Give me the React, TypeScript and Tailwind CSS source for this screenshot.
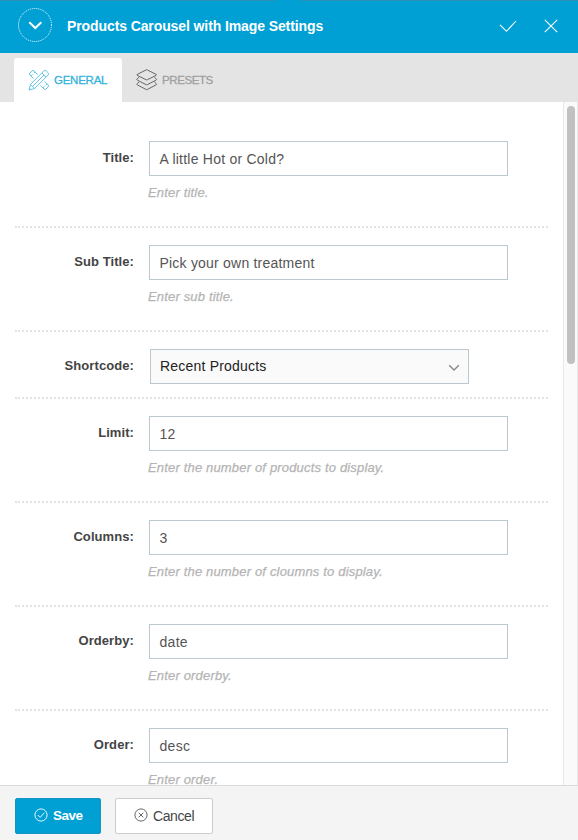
import React from "react";

type Field = {
  label: string;
  value: string;
  help?: string;
  select?: boolean;
  valueTrack: string;
};

const fields: Field[] = [
  { label: "Title:", value: "A little Hot or Cold?", help: "Enter title.", valueTrack: "tracking-[0.23px]" },
  { label: "Sub Title:", value: "Pick your own treatment", help: "Enter sub title.", valueTrack: "tracking-[0.21px]" },
  { label: "Shortcode:", value: "Recent Products", select: true, valueTrack: "tracking-[0.2px]" },
  { label: "Limit:", value: "12", help: "Enter the number of products to display.", valueTrack: "tracking-[0.2px]" },
  { label: "Columns:", value: "3", help: "Enter the number of cloumns to display.", valueTrack: "tracking-[0.2px]" },
  { label: "Orderby:", value: "date", help: "Enter orderby.", valueTrack: "tracking-[0.3px]" },
  { label: "Order:", value: "desc", help: "Enter order.", valueTrack: "tracking-[0.3px]" },
];

function ToolsIcon() {
  return (
    <svg width="22" height="22" viewBox="0 0 22 22" fill="none" stroke="#57bde1" strokeWidth="0.9" strokeLinejoin="round">
      <path d="M9.6 5.6 6 1.9Q5 .9 4 1.9L1.9 4Q.9 5 1.9 6L5.6 9.6M3 7.1l1.7-1.7M7.1 3 5.9 4.2M12.4 16.4 16 20q1 1 2 0l2.1-2.1q1-1 0-2L16.4 12.4M14.9 19l1.7-1.7M19 14.9l-1.2 1.2" />
      <path d="M1 21l1.5-5.6L15.8 2q1.3-1.3 2.6 0L20 3.6q1.3 1.3 0 2.6L6.6 19.5 1 21ZM2.5 15.4 6.6 19.5M13.9 3.9 18.1 8.1M4.6 17.4 16 6M1.5 19.2l1.3 1.3" />
    </svg>
  );
}

function LayersIcon() {
  return (
    <svg width="22" height="22" viewBox="0 0 22 22" fill="none" stroke="#666" strokeWidth="1" strokeLinejoin="round">
      <path d="M10.2.9q.5-.3 1 0l9 4.5q.8.4 0 .9l-9 4.5q-.5.3-1 0l-9-4.5q-.8-.5 0-.9Z" />
      <path d="M3 8.2 1.2 9.8q-.8.8.1 1.3l8.9 4.6q.5.3 1 0l8.9-4.6q.9-.5.1-1.3L18.4 8.2" />
      <path d="M3 13 1.2 14.6q-.8.8.1 1.3l8.9 4.6q.5.3 1 0l8.9-4.6q.9-.5.1-1.3L18.4 13" />
    </svg>
  );
}

function Row({ field }: { field: Field }) {
  return (
    <div className={`flex shrink-0 items-start pt-[17px] ${field.select ? "h-[67px]" : "h-[104px]"} border-b-2 border-dotted border-[#e3e3e3]`}>
      <label className="w-[119px] shrink-0 pt-2 text-right text-[13px] leading-[18px] font-bold tracking-[0.08px] text-[#444]">
        {field.label}
      </label>
      {field.select ? (
        <div className="ml-4 flex h-[35px] w-[319px] items-center justify-between border border-[#bcc8d0] bg-[#fafafa] pr-2 pl-[9px]">
          <span className={`-mt-0.5 text-[14px] leading-[18px] text-[#222] ${field.valueTrack}`}>{field.value}</span>
          <svg width="12" height="8" viewBox="0 0 12 8" fill="none" stroke="#888" strokeWidth="1.4" className="mt-[3px]">
            <path d="M1.2 1.3 6 6l4.8-4.7" />
          </svg>
        </div>
      ) : (
        <div className="ml-[15px] w-[359px]">
          <div className="flex h-[35px] items-center border border-[#bcc8d0] bg-white pt-px pl-[9.5px]">
            <span className={`text-[14px] leading-[18px] text-[#555] ${field.valueTrack}`}>{field.value}</span>
          </div>
          <p className="-ml-px pt-2 text-[13px] leading-[18px] tracking-[0.17px] text-[#b4b4b4] italic [-webkit-text-stroke:0.25px_#b4b4b4]">{field.help}</p>
        </div>
      )}
    </div>
  );
}

export default function App() {
  return (
    <div className="flex h-[840px] w-[578px] flex-col overflow-hidden bg-white font-['Liberation_Sans',Arial,sans-serif]">
      <header className="flex h-[53px] shrink-0 flex-col bg-[#00a0d5]">
        <div className="flex h-px justify-between">
          <i className="w-[276px] bg-[#2b90b8]" />
          <i className="w-[277px] bg-[#2b90b8]" />
        </div>
        <div className="flex h-12 items-center pl-[18px]">
          <svg width="34" height="34" viewBox="0 0 34 34" fill="none" stroke="#fff">
            <circle cx="17" cy="17" r="16.5" strokeWidth="1" strokeDasharray="1 1" />
            <path d="M11.3 14.3 17.3 20l6-5.7" strokeWidth="2" />
          </svg>
          <h1 className="ml-[15px] pt-0.5 text-[14px] leading-5 font-bold tracking-[-0.1px] whitespace-nowrap text-white">
            Products Carousel with Image Settings
          </h1>
          <svg width="18" height="14" viewBox="0 0 18 14" fill="none" stroke="#fff" strokeWidth="1.1" className="mt-0.5 mr-[27px] ml-auto">
            <path d="M1 5.8 7.5 12.3 17 2" />
          </svg>
          <svg width="14" height="14" viewBox="0 0 14 14" fill="none" stroke="#fff" strokeWidth="1.1" className="mt-0.5 mr-5">
            <path d="m.8.8 12.4 12.4M13.2.8.8 13.2" />
          </svg>
        </div>
      </header>

      <nav className="flex h-[49px] shrink-0 items-end bg-[#e4e4e4] pl-[14px]">
        <div className="flex h-11 w-[108px] items-center rounded-t-[3px] bg-white pl-[14px]">
          <ToolsIcon />
          <span className="ml-1 text-[11.5px] leading-4 tracking-[-0.25px] text-[#35b2dd] [-webkit-text-stroke:0.3px_#35b2dd]">GENERAL</span>
        </div>
        <div className="flex h-11 items-center pl-[14px]">
          <LayersIcon />
          <span className="ml-1 text-[11.5px] leading-4 tracking-[-0.4px] text-[#a0a0a0] [-webkit-text-stroke:0.3px_#a0a0a0]">PRESETS</span>
        </div>
      </nav>

      <main className="flex min-h-0 flex-1">
        <div className="flex w-[563px] shrink-0 flex-col overflow-hidden pt-[22px] pr-[15px] pl-[15px]">
          {fields.map((f) => (
            <Row key={f.label} field={f} />
          ))}
        </div>
        <div className="w-[15px] border-x border-[#e8e8e8] bg-[#fafafa] pt-1 pl-[3px]">
          <div className="h-[258px] w-2 rounded-full bg-[#c1c1c1]" />
        </div>
      </main>

      <footer className="flex h-[55px] shrink-0 items-start border-t border-[#dadada] bg-[#f4f4f4] pt-3 pl-[15px]">
        <button className="flex h-9 w-[86px] items-center rounded-[2px] border border-[#1795c2] bg-[#00a0d5] pl-[18px] text-white">
          <svg width="14" height="14" viewBox="0 0 14 14" fill="none" stroke="#fff" strokeWidth="0.9" className="-mt-0.5">
            <circle cx="7" cy="7" r="6.1" />
            <path d="m3.8 7 2.3 2.4 4.3-4.7" />
          </svg>
          <span className="ml-[5px] text-[13.5px] leading-4 font-bold tracking-[-0.5px]">Save</span>
        </button>
        <button className="ml-[14px] flex h-9 w-[98px] items-center rounded-[2px] border border-[#ccc] bg-white pl-[18px] text-[#444]">
          <svg width="14" height="14" viewBox="0 0 14 14" fill="none" stroke="#555" strokeWidth="0.9" className="-mt-0.5">
            <circle cx="7" cy="7" r="6.1" />
            <path d="m4.7 4.7 4.6 4.6M9.3 4.7 4.7 9.3" />
          </svg>
          <span className="ml-[5px] text-[14px] leading-4 tracking-[-0.4px]">Cancel</span>
        </button>
      </footer>
    </div>
  );
}
